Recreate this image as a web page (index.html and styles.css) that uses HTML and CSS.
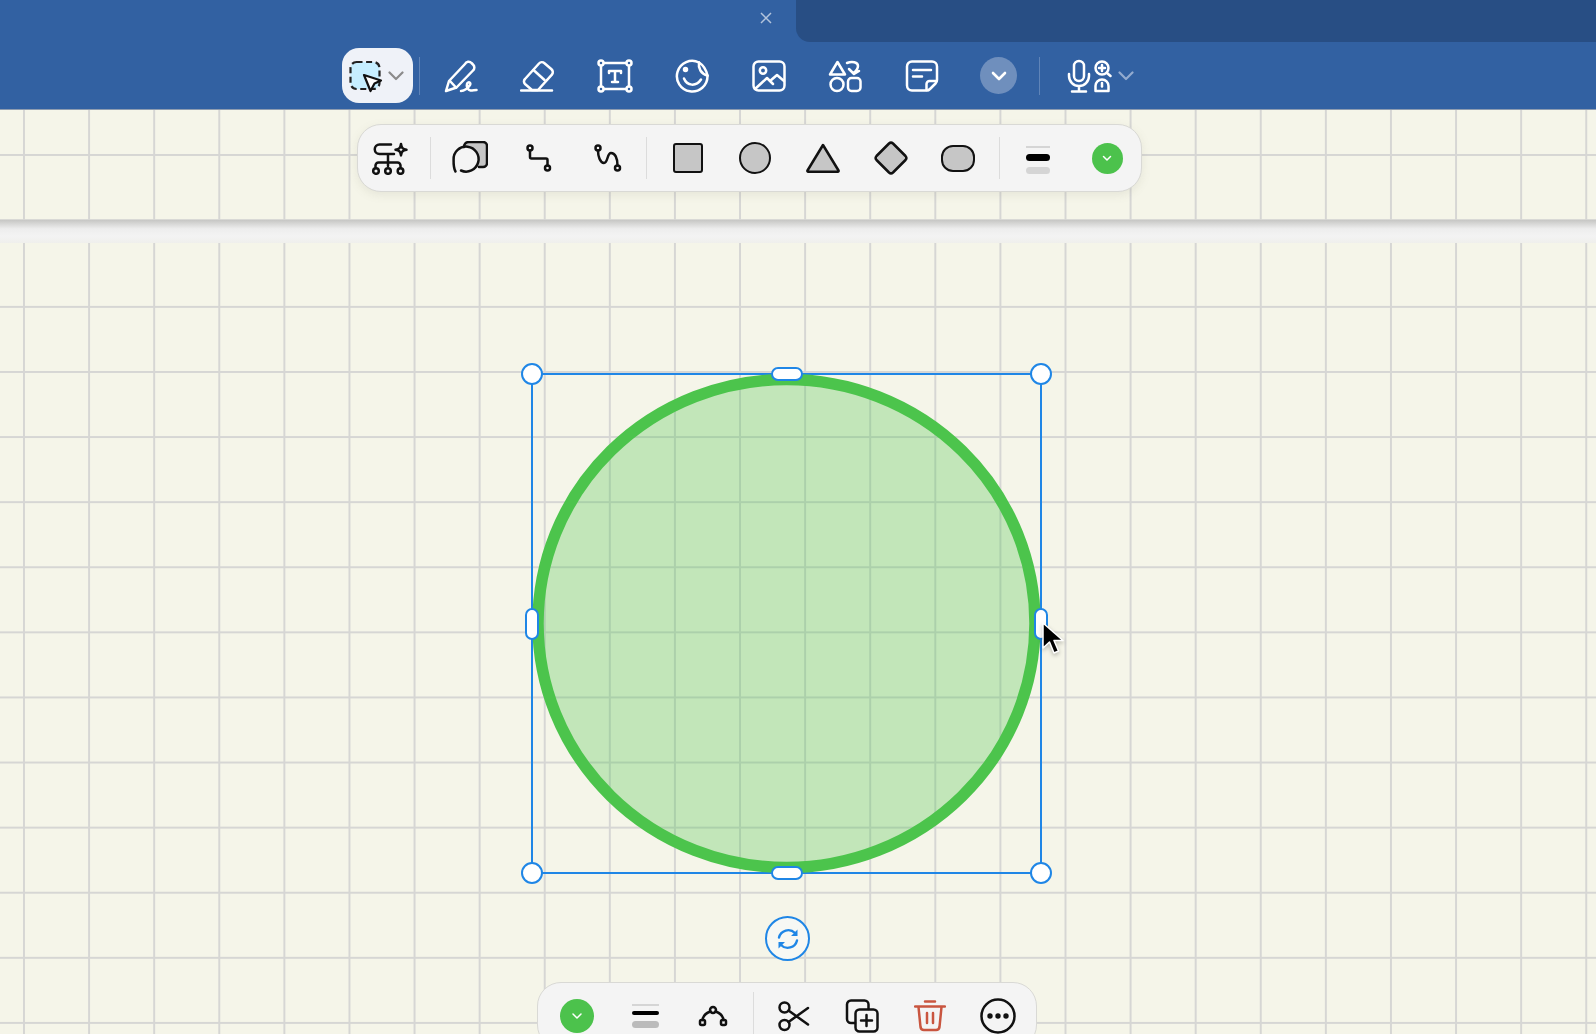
FILE: index.html
```html
<!DOCTYPE html>
<html lang="en">
<head>
<meta charset="utf-8">
<title>Notes canvas</title>
<link rel="stylesheet" href="styles.css">
</head>
<body>
<header class="header">
  <div class="tabstrip">
    <div class="tab">
      <svg class="close" width="12" height="12" viewBox="0 0 12 12"><path d="M1 1l10 10M11 1L1 11"/></svg>
    </div>
    <div class="tab-rest"></div>
  </div>
  <div class="tools">
    <div class="sel-btn">
      <svg width="36" height="34" viewBox="0 0 36 34">
        <rect x="1.500" y="3" width="29" height="27" rx="6" fill="#c6eeff" stroke="#222" stroke-width="2.200" stroke-dasharray="6 3.600"/>
        <path d="M15 16l17 5.500-6.500 3-4 7.500z" fill="#fff" stroke="#111" stroke-width="2.200" stroke-linejoin="round"/>
      </svg>
      <svg class="chev-gray" width="16" height="10" viewBox="0 0 16 10"><path d="M1.500 1.500L8 8l6.500-6.500"/></svg>
    </div>
    <span class="sep sep-light sep-first"></span>
    <div class="slot"><svg class="wicon" width="34" height="34" viewBox="0 0 34 34"><path d="M2 32l3-10L21 5a4 4 0 0 1 6.500-1l1.500 1.500a4 4 0 0 1 0 6L12.500 28.500z"/><path d="M6 22l6 6.500"/><path d="M17 32c3 0 7-3 9-6 1.500-2.500-2-4-3-1-1 3 1 6 3.500 6.500 1.500.2 4-.5 6-.5"/></svg></div>
    <div class="slot"><svg class="wicon" width="36" height="34" viewBox="0 0 36 34"><path d="M5 20L19 4.500a4 4 0 0 1 5.500-.3l7 6a4 4 0 0 1 .4 5.500L18 31h-6l-7-6a3.500 3.500 0 0 1 0-5z"/><path d="M13.500 11l11 10"/><path d="M1 31.500h31"/></svg></div>
    <div class="slot"><svg class="wicon" width="36" height="34" viewBox="0 0 36 34"><rect x="4" y="4" width="28" height="26"/><circle cx="4" cy="4" r="2.500" class="bluefill"/><circle cx="32" cy="4" r="2.500" class="bluefill"/><circle cx="4" cy="30" r="2.500" class="bluefill"/><circle cx="32" cy="30" r="2.500" class="bluefill"/><path d="M12 14v-2h12v2M18 12v11M15 23h6"/></svg></div>
    <div class="slot"><svg class="wicon" width="34" height="34" viewBox="0 0 34 34"><path d="M24 3.500A15.300 15.300 0 1 0 32.500 17"/><path d="M24 3.500c4 2.500 7 6.500 8.500 13"/><path d="M24 3.500c-1 5.500 2 11.500 8.500 13"/><circle cx="10.500" cy="10.500" r="1.500" fill="#fff"/><path d="M9 19.500c3 7.500 12 8.500 17 1"/></svg></div>
    <div class="slot"><svg class="wicon" width="34" height="32" viewBox="0 0 34 32"><rect x="1.500" y="1.500" width="31" height="29" rx="5"/><circle cx="11" cy="10.500" r="3.200"/><path d="M3 29l12-11 6 6M18 21l7-6 7 6"/></svg></div>
    <div class="slot"><svg class="wicon" width="34" height="34" viewBox="0 0 34 34"><path d="M9.500 3L17 15.500H2z"/><path d="M19 4c5-2 11-1 11 3 0 3-2 5-4 7M21 10l5 5 5-3"/><circle cx="9" cy="25.500" r="6.500"/><rect x="20" y="19" width="12.500" height="13" rx="3.500"/></svg></div>
    <div class="slot"><svg class="wicon" width="34" height="32" viewBox="0 0 34 32"><path d="M22 30.500H7a5 5 0 0 1-5-5v-19a5 5 0 0 1 5-5h20a5 5 0 0 1 5 5V20c0 1.500-.5 2.500-1.500 3.500l-5.500 5.500c-1 1-2 1.500-3 1.500z"/><path d="M21.500 30v-6a3 3 0 0 1 3-3H31.500M8 10h18M8 16.500h9"/></svg></div>
    <div class="slot"><span class="more"><svg width="16" height="10" viewBox="0 0 16 10"><path d="M2 2l6 6 6-6"/></svg></span></div>
    <span class="sep sep-light sep-second"></span>
    <svg class="wicon mic" width="24" height="34" viewBox="0 0 24 34"><rect x="7" y="2" width="10" height="20" rx="5"/><path d="M2 15v2a10 10 0 0 0 20 0v-2M12 27v5M5 32.500h14"/></svg>
    <svg class="wicon lasso" width="18" height="34" viewBox="0 0 18 34"><circle cx="8" cy="9" r="6.500"/><path d="M8 6v6M5 9h6M13 14l3.500 3"/><path d="M1.500 32v-5a6.500 6.500 0 0 1 13 0v5z"/><path d="M8 24v3.500"/></svg>
    <svg class="chev-soft" width="16" height="10" viewBox="0 0 16 10"><path d="M1.500 1.500L8 8l6.500-6.500"/></svg>
  </div>
</header>

<section class="page page-top">
  <div class="bar bar-shape">
    <div class="slot-a first"><svg class="bicon" width="36" height="34" viewBox="0 0 36 34"><path d="M19 3.500H7.500a4.700 4.700 0 0 0 0 9.500H22M16 13v12M3.500 27v-2.500a3 3 0 0 1 3-3h19a3 3 0 0 1 3 3V27"/><circle cx="4" cy="30" r="2.800"/><circle cx="16" cy="30" r="2.800"/><circle cx="28.500" cy="30" r="2.800"/><path d="M29 3c.6 4 1.500 5 5.500 5.700-4 .7-4.900 1.700-5.500 5.700-.6-4-1.500-5-5.500-5.700C27.500 8 28.400 7 29 3z" fill="#fff"/></svg></div>
    <span class="sep"></span>
    <div class="slot-a"><svg class="bicon" width="36" height="34" viewBox="0 0 36 34"><path class="gf" d="M12 6a5 5 0 0 1 5-5h14a4 4 0 0 1 4 4v17a4 4 0 0 1-4 4H17z"/><circle class="bgf" cx="14" cy="18" r="12.500"/><path d="M12 6c0-3 2-5 5-5h14a4 4 0 0 1 4 4v17a4 4 0 0 1-4 4h-4"/><path d="M3.500 30.500C2 28 1.500 23 1.600 18.500A12.500 12.500 0 1 1 9 29.500"/></svg></div>
    <div class="slot-a"><svg class="bicon" width="28" height="28" viewBox="0 0 28 28"><circle cx="5" cy="4" r="2.500"/><circle cx="22.500" cy="24" r="2.500"/><path d="M5 6.500v6.500a1.500 1.500 0 0 0 1.500 1.500h14.500a1.500 1.500 0 0 1 1.500 1.500v5.500"/></svg></div>
    <div class="slot-a"><svg class="bicon" width="28" height="28" viewBox="0 0 28 28"><circle cx="4" cy="4" r="2.500"/><circle cx="23.500" cy="24" r="2.500"/><path d="M4 6.500C4 12 6 19 10 19C14 19 13 9 17 9C21 9 23.500 14 23.500 21.500"/></svg></div>
    <span class="sep"></span>
    <div class="slot-b gap3"><span class="sq"></span></div>
    <div class="slot-b"><span class="circ"></span></div>
    <div class="slot-b"><svg class="bicon" width="34" height="30" viewBox="0 0 34 30"><path class="g" d="M17 2L32.500 27.500a.8.8 0 0 1-.7 1.200H2.200a.8.8 0 0 1-.7-1.200z"/></svg></div>
    <div class="slot-b"><svg class="bicon" width="34" height="34" viewBox="0 0 34 34"><path class="g" d="M15 2.500a3 3 0 0 1 4 0l12.500 12.500a3 3 0 0 1 0 4L19 31.500a3 3 0 0 1-4 0L2.500 19a3 3 0 0 1 0-4z"/></svg></div>
    <div class="slot-b"><span class="rnd"></span></div>
    <span class="sep sep-wide"></span>
    <div class="slot-a"><span class="lines"><i class="l-thin"></i><i class="l-bold"></i><i class="l-fat"></i></span></div>
    <div class="slot-a"><span class="swatch"><svg width="10" height="7" viewBox="0 0 10 7"><path d="M1.500 1.500L5 5l3.500-3.500"/></svg></span></div>
  </div>
</section>

<div class="page-break"></div>

<section class="page page-bottom">
  <div class="selection">
    <svg class="oval" viewBox="0 0 511 501" preserveAspectRatio="none"><ellipse cx="255.500" cy="250.500" rx="248.500" ry="244"/></svg>
    <span class="h-dot tl"></span><span class="h-dot tr"></span><span class="h-dot bl"></span><span class="h-dot br"></span>
    <span class="h-pill-x tc"></span><span class="h-pill-x bc"></span>
    <span class="h-pill-y ml"></span><span class="h-pill-y mr"></span>
  </div>
  <div class="rotate">
    <svg width="26" height="26" viewBox="0 0 26 26"><path d="M4 11.500A9.500 9.500 0 0 1 20 7M22 14.500A9.500 9.500 0 0 1 6 19"/><path class="tip" d="M22.500 3.500v6.500h-6.500zM3.500 22.500V16h6.500z"/></svg>
  </div>
  <svg class="cursor" width="26" height="36" viewBox="0 0 26 36"><path d="M2 1v25l6.500-6 4.500 11 4.500-2-4.500-10.500h9z"/></svg>
  <div class="bar bar-edit">
    <div class="slot-c"><span class="swatch swatch-lg"><svg width="12" height="8" viewBox="0 0 12 8"><path d="M2 2l4 4 4-4"/></svg></span></div>
    <div class="slot-c"><span class="lines lines-lg"><i class="l-thin"></i><i class="l-bold"></i><i class="l-fat"></i></span></div>
    <div class="slot-c"><svg class="bicon" width="30" height="22" viewBox="0 0 30 22"><circle cx="15" cy="5" r="3"/><rect x="2" y="15" width="5" height="5" rx="1.500"/><rect x="23" y="15" width="5" height="5" rx="1.500"/><path d="M12.500 6.500C8 8 5 11 4.500 15M17.500 6.500C22 8 25 11 25.500 15"/></svg></div>
    <span class="sep sep-tall"></span>
    <div class="slot-c"><svg class="bicon" width="32" height="32" viewBox="0 0 32 32"><circle cx="6.500" cy="7.500" r="5"/><circle cx="6.500" cy="25" r="5"/><path d="M10.500 10.500L30 24.500M10.500 22L30 8"/></svg></div>
    <div class="slot-c"><svg class="bicon" width="34" height="34" viewBox="0 0 34 34"><path d="M10 24H6a4 4 0 0 1-4-4V5.500a4 4 0 0 1 4-4h13.500a4 4 0 0 1 4 4V10"/><rect x="10.500" y="10.500" width="22" height="22" rx="4"/><path d="M21.500 16v11M16 21.500h11"/></svg></div>
    <div class="slot-c"><svg class="ricon" width="32" height="32" viewBox="0 0 32 32"><path d="M1 6.500h30M11 1.500h10M4.500 7l2 20a3.500 3.500 0 0 0 3.500 3h12a3.500 3.500 0 0 0 3.500-3l2-20M13 13v10M19 13v10"/></svg></div>
    <div class="slot-c"><svg class="bicon" width="36" height="36" viewBox="0 0 36 36"><circle cx="18" cy="18" r="16.500"/><circle class="dot" cx="10" cy="18" r="2.700"/><circle class="dot" cx="18" cy="18" r="2.700"/><circle class="dot" cx="26" cy="18" r="2.700"/></svg></div>
  </div>
</section>
</body>
</html>
```

FILE: styles.css
```css
* { box-sizing: border-box; }
html, body { margin: 0; height: 100%; }
body {
  width: 1596px;
  height: 1034px;
  overflow: hidden;
  display: flex;
  flex-direction: column;
  background: #f5f5e9;
  font-family: "Liberation Sans", sans-serif;
}

/* header */
.header { flex: none; height: 110px; background: #3261a2; display: flex; flex-direction: column; border-bottom: 1px solid #8e9cb0; }
.tabstrip { flex: none; height: 42px; display: flex; }
.tab { flex: none; width: 796px; display: flex; justify-content: flex-end; align-items: center; padding: 0 24px 6px 0; }
.close path { stroke: #b3c4dc; stroke-width: 1.500; fill: none; }
.tab-rest { flex: 1; background: #284e84; border-bottom-left-radius: 14px; }
.tools { flex: 1; display: flex; align-items: center; padding-left: 342px; }
.sel-btn { flex: none; width: 71px; height: 55px; border-radius: 17px; background: #eff2f8; display: flex; align-items: center; padding-left: 7px; gap: 3px; }
.chev-gray path { stroke: #8b8b8b; stroke-width: 2.200; fill: none; stroke-linecap: round; stroke-linejoin: round; }
.chev-soft { margin-left: 6px; }
.chev-soft path { stroke: #93abcf; stroke-width: 2.200; fill: none; stroke-linecap: round; stroke-linejoin: round; }
.sep { flex: none; width: 1px; height: 42px; background: #dcdcdc; margin: 0 4px; }
.sep-light { background: #5f84b8; height: 38px; }
.sep-first { margin: 0 3px 0 6px; }
.sep-second { margin: 0 27px 0 2px; }
.slot { flex: none; width: 76.800px; display: flex; justify-content: center; align-items: center; }
.wicon { fill: none; stroke: #fff; stroke-width: 2.500; stroke-linecap: round; stroke-linejoin: round; }
.wicon .bluefill { fill: #3261a2; }
.mic { flex: none; }
.lasso { flex: none; margin-left: 3px; }
.more { width: 37px; height: 37px; border-radius: 50%; background: #6f8fbd; display: flex; align-items: center; justify-content: center; }
.more path { stroke: #fff; stroke-width: 2.600; fill: none; stroke-linecap: round; stroke-linejoin: round; }

/* canvas pages */
.page {
  position: relative;
  background-color: #f5f5e9;
  background-image:
    linear-gradient(90deg, #d6d6d4 2px, transparent 2px),
    linear-gradient(#d6d6d4 2px, transparent 2px);
  background-size: 65.100px 65.100px;
}
.page-top { flex: none; height: 110px; background-position: 23px 44px, 23px 44px; }
.page-bottom { flex: 1; background-position: 23px 62.900px, 23px 62.900px; }
.page-break { flex: none; height: 23px; background: linear-gradient(#c6c6c4, #ededed 38%, #f3f3f3 70%, #efefec); }

/* floating toolbars */
.bar { position: absolute; display: flex; align-items: center; background: #f4f4f4; border: 1px solid #d9d9d5; }
.bar-shape { left: 357px; top: 14px; width: 785px; height: 68px; border-radius: 24px; box-shadow: 0 3px 10px rgba(120, 120, 100, .12); }
.bar-edit { left: 537px; top: 739px; width: 500px; height: 67px; padding: 0 5px; border-radius: 24px; }
.slot-a { flex: none; width: 69px; display: flex; justify-content: center; align-items: center; }
.slot-a.first { width: 64px; margin-right: 4px; }
.slot-b { flex: none; width: 67.600px; display: flex; justify-content: center; align-items: center; }
.slot-c { flex: none; width: 68px; display: flex; justify-content: center; align-items: center; }
.gap3 { margin-left: 3px; }
.bicon { fill: none; stroke: #111; stroke-width: 2.500; stroke-linecap: round; stroke-linejoin: round; }
.bicon .g { fill: #c6c6c6; }
.bicon .gf { fill: #c6c6c6; stroke: none; }
.bicon .bgf { fill: #f4f4f4; stroke: none; }
.bicon .dot { fill: #111; stroke: none; }
.ricon { fill: none; stroke: #c9553f; stroke-width: 2.500; stroke-linecap: round; stroke-linejoin: round; }
.sq, .circ, .rnd { display: block; background: #c6c6c6; border: 2.500px solid #111; }
.sq { width: 30px; height: 30px; border-radius: 3px; }
.circ { width: 32px; height: 32px; border-radius: 50%; }
.rnd { width: 34px; height: 27px; border-radius: 12px; }
.sep-wide { margin-left: 7px; }
.lines { display: flex; flex-direction: column; width: 24px; align-items: stretch; margin-top: 4px; }
.lines i { display: block; }
.l-thin { height: 2px; background: #d5d5d5; margin-bottom: 6px; }
.l-bold { height: 7px; background: #000; border-radius: 4px; margin-bottom: 6px; }
.l-fat { height: 7px; background: #d5d5d5; border-radius: 4px; }
.lines-lg { width: 27px; margin-top: 0; }
.lines-lg .l-bold { height: 4px; margin-bottom: 6px; }
.lines-lg .l-thin { margin-bottom: 5px; }
.lines-lg .l-fat { background: #bbb; }
.swatch { width: 31px; height: 31px; border-radius: 50%; background: #4cc24c; display: flex; align-items: center; justify-content: center; }
.swatch path { stroke: #fff; stroke-width: 1.500; fill: none; stroke-linecap: round; stroke-linejoin: round; }
.swatch-lg { width: 34px; height: 34px; }
.sep-tall { height: 44px; margin: 9px 6px 0; align-self: flex-start; }

/* selected shape */
.selection { position: absolute; left: 531px; top: 130px; width: 511px; height: 501px; border: 2px solid #1f86e6; }
.oval { position: absolute; left: -2px; top: -2px; width: 511px; height: 501px; }
.oval ellipse { fill: rgba(76, 194, 76, .3); stroke: #4cc44c; stroke-width: 11.500; }
.h-dot, .h-pill-x, .h-pill-y { position: absolute; background: #fff; border: 2.500px solid #1f86e6; }
.h-dot { width: 22px; height: 22px; border-radius: 50%; }
.tl { left: -12px; top: -12px; }
.tr { right: -12px; top: -12px; }
.bl { left: -12px; bottom: -12px; }
.br { right: -12px; bottom: -12px; }
.h-pill-x { width: 32px; height: 14px; border-radius: 7px; left: 238px; }
.tc { top: -8px; }
.bc { bottom: -8px; }
.h-pill-y { width: 14px; height: 32px; border-radius: 7px; top: 233px; }
.ml { left: -8px; }
.mr { right: -8px; }
.rotate { position: absolute; left: 765px; top: 673px; width: 45px; height: 45px; border-radius: 50%; background: #f7f8f4; border: 2px solid #1f86e6; display: flex; align-items: center; justify-content: center; }
.rotate path { fill: none; stroke: #1f86e6; stroke-width: 2.400; stroke-linecap: round; }
.rotate .tip { fill: #1f86e6; stroke: none; }
.cursor { position: absolute; left: 1041px; top: 379px; filter: drop-shadow(0 2px 2px rgba(0, 0, 0, .25)); }
.cursor path { fill: #000; stroke: #fff; stroke-width: 1.500; stroke-linejoin: round; }
```
